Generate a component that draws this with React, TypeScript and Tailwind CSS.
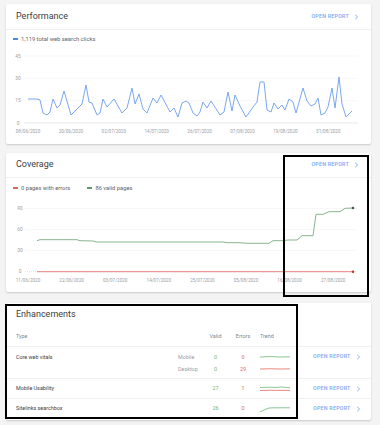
import React from 'react';

const perfPoints = [
  [28, 99], [37, 99], [40, 100], [43, 113], [47, 115], [50, 112], [53, 99], [57, 108], [60, 105], [64, 91],
  [71, 115], [82, 104], [86, 85], [89, 102], [92, 103], [97, 115], [100, 113], [103, 99], [107, 107], [114, 99],
  [122, 113], [127, 108], [132, 88], [135, 104], [139, 94], [143, 109], [147, 113], [153, 98], [157, 103], [161, 95],
  [170, 112], [174, 108], [178, 117], [182, 103], [186, 101], [189, 103], [193, 113], [197, 116], [200, 112], [203, 102],
  [207, 108], [211, 101], [220, 115], [224, 112], [228, 92], [232, 111], [235, 95], [240, 106], [246, 117], [253, 107],
  [257, 102], [260, 82], [264, 82], [267, 110], [271, 112], [274, 103], [278, 109], [282, 105], [285, 110], [289, 99],
  [293, 102], [296, 113], [303, 88], [307, 101], [311, 106], [315, 104], [318, 98], [321, 115], [325, 113], [328, 107],
  [332, 88], [335, 108], [339, 77], [342, 104], [346, 117], [352, 111],
];

const coveragePoints = [
  [37, 240.7], [40, 239.7], [77, 239.7], [80, 240.7], [93, 241], [97, 242], [223, 242], [227, 242.7], [240, 242.7],
  [247, 243.3], [269, 243.3], [273, 240.7], [283, 240.7], [288, 240], [297, 240], [302, 235.7], [313, 235.7],
  [316, 214.3], [323, 214.3], [329, 211.7], [340, 211.7], [345, 208.3], [353, 208],
];

const perfDates = ['08/06/2020', '20/06/2020', '02/07/2020', '14/07/2020', '26/07/2020', '07/08/2020', '19/08/2020', '31/08/2020'];
const covDates = ['11/06/2020', '22/06/2020', '03/07/2020', '14/07/2020', '25/07/2020', '05/08/2020', '16/08/2020', '27/08/2020'];

const toPts = (pts: number[][]) => pts.map((p) => p.join(',')).join(' ');

function Chevron() {
  return (
    <svg width="5" height="6" viewBox="0 0 5 6" className="ml-[5px]">
      <path d="M1.2 0.8 L3.6 3 L1.2 5.2" fill="none" stroke="#7aa7f2" strokeWidth="0.9" />
    </svg>
  );
}

function OpenReport() {
  return (
    <div className="flex items-center text-[5.3px] font-medium tracking-[0.25px] text-[#7aa7f2]">
      OPEN REPORT
      <Chevron />
    </div>
  );
}

function LegendItem({ color, label }: { color: string; label: string }) {
  return (
    <div className="flex items-center gap-[3px]">
      <span className="h-[1.5px] w-[5px]" style={{ backgroundColor: color }} />
      <span>{label}</span>
    </div>
  );
}

function PerformanceChart() {
  const grid = [
    { v: '45', y: 56 },
    { v: '30', y: 78.3 },
    { v: '15', y: 100.7 },
    { v: '0', y: 123 },
  ];
  return (
    <svg width="365" height="94" viewBox="6 48 365 94" className="block">
      {grid.map((g) => (
        <g key={g.v}>
          <line x1="24" x2="358" y1={g.y} y2={g.y} stroke={g.v === '0' ? '#d5d8db' : '#f1f2f3'} strokeWidth="0.6" />
          <text x="18" y={g.y + 1.7} textAnchor="middle" fontSize="4.8" fill="#9aa0a6" fontFamily="Roboto">{g.v}</text>
        </g>
      ))}
      {perfDates.map((d, i) => (
        <text key={d} x={28 + i * 42.9} y="132.5" textAnchor="middle" fontSize="4.6" fill="#9aa0a6" fontFamily="Roboto">{d}</text>
      ))}
      <polyline points={toPts(perfPoints)} fill="none" stroke="#7ba7f0" strokeWidth="1" strokeLinejoin="round" />
    </svg>
  );
}

function CoverageChart() {
  const grid = [
    { v: '90', y: 208.5 },
    { v: '60', y: 229.5 },
    { v: '30', y: 250.5 },
    { v: '0', y: 271.7 },
  ];
  return (
    <svg width="365" height="92" viewBox="6 198 365 92" className="block">
      {grid.map((g) => (
        <g key={g.v}>
          <line x1="25" x2="357" y1={g.y} y2={g.y} stroke={g.v === '0' ? '#c9ccd0' : '#f1f2f3'} strokeWidth="0.6" strokeDasharray={g.v === '0' ? '1 1' : undefined} />
          <text x="20" y={g.y + 1.7} textAnchor="middle" fontSize="4.8" fill="#9aa0a6" fontFamily="Roboto">{g.v}</text>
        </g>
      ))}
      {covDates.map((d, i) => (
        <text key={d} x={28 + i * 43.6} y="281.5" textAnchor="middle" fontSize="4.6" fill="#9aa0a6" fontFamily="Roboto">{d}</text>
      ))}
      <polyline points={toPts(coveragePoints)} fill="none" stroke="#87b58f" strokeWidth="1" />
      <circle cx="353" cy="208" r="1.3" fill="#3d5a43" />
      <line x1="37" x2="353" y1="271.7" y2="271.7" stroke="#e57a70" strokeWidth="0.9" />
      <circle cx="353" cy="271.7" r="1.3" fill="#b23a30" />
    </svg>
  );
}

function Trend({ lines }: { lines: { d: string; color: string }[] }) {
  return (
    <svg width="30" height="12" viewBox="0 0 30 12" className="block">
      {lines.map((l, i) => (
        <path key={i} d={l.d} fill="none" stroke={l.color} strokeWidth="0.8" />
      ))}
    </svg>
  );
}

const green = '#6cb97a';
const red = '#e4675c';

export default function App() {
  return (
    <div className="relative h-[425px] w-[380px] overflow-hidden bg-[#f4f4f4] pl-[6px] pt-[4px] font-['Roboto',sans-serif]">
      <div className="flex w-[365px] flex-col">
        {/* Performance */}
        <div className="h-[140px] rounded-[2px] bg-white shadow-[0_1px_2px_rgba(0,0,0,0.18)]">
          <div className="flex h-[26px] items-center justify-between border-b border-[#eef0f2] pl-[10px] pr-[12px]">
            <span className="text-[9px] text-[#3c4043]">Performance</span>
            <OpenReport />
          </div>
          <div className="flex h-[18px] items-center pl-[7px] text-[5.8px] text-[#5f6368]">
            <LegendItem color="#4f86ec" label="1,119 total web search clicks" />
          </div>
          <PerformanceChart />
        </div>

        {/* Coverage */}
        <div className="mt-[9px] h-[139px] rounded-[2px] bg-white shadow-[0_1px_2px_rgba(0,0,0,0.18)]">
          <div className="flex h-[25px] items-center justify-between border-b border-[#eef0f2] pl-[10px] pr-[12px]">
            <span className="text-[9px] text-[#3c4043]">Coverage</span>
            <OpenReport />
          </div>
          <div className="flex h-[20px] items-center gap-[17px] pl-[7px] text-[5.8px] text-[#5f6368]">
            <LegendItem color="#e0665b" label="0 pages with errors" />
            <LegendItem color="#5d9a68" label="86 valid pages" />
          </div>
          <CoverageChart />
        </div>

        {/* Enhancements */}
        <div className="mt-[11px] h-[117px] rounded-[2px] bg-white text-[5.4px] shadow-[0_1px_2px_rgba(0,0,0,0.18)]">
          <div className="flex h-[24px] items-center pl-[10px]">
            <span className="text-[9px] text-[#3c4043]">Enhancements</span>
          </div>
          <div className="flex h-[20px] items-center border-b border-[#eef0f2] pl-[10px] text-[#80868b]">
            <span className="w-[162px]">Type</span>
            <span className="w-[25px]" />
            <span className="w-[25px] text-center">Valid</span>
            <span className="w-[30px] text-center">Errors</span>
            <span className="ml-[2px] w-[30px]">Trend</span>
          </div>

          <div className="flex h-[32px] border-b border-[#eef0f2] pl-[10px] pt-[4px]">
            <span className="flex h-[12px] w-[162px] items-center text-[#3c4043]">Core web vitals</span>
            <div className="flex flex-col">
              <div className="flex h-[12px] items-center">
                <span className="w-[25px] text-[#9aa0a6]">Mobile</span>
                <span className="w-[25px] text-center" style={{ color: green }}>0</span>
                <span className="w-[30px] text-center" style={{ color: red }}>0</span>
                <span className="ml-[2px]">
                  <Trend lines={[{ d: 'M0 6 L10 5.6 L20 6 L30 5.8', color: green }]} />
                </span>
              </div>
              <div className="flex h-[12px] items-center">
                <span className="w-[25px] text-[#9aa0a6]">Desktop</span>
                <span className="w-[25px] text-center" style={{ color: green }}>0</span>
                <span className="w-[30px] text-center" style={{ color: red }}>29</span>
                <span className="ml-[2px]">
                  <Trend lines={[{ d: 'M0 6 L10 5.8 L20 6 L30 5.9', color: red }]} />
                </span>
              </div>
            </div>
            <div className="ml-[23px] flex h-[12px] items-center">
              <OpenReport />
            </div>
          </div>

          <div className="flex h-[20px] items-center border-b border-[#eef0f2] pl-[10px]">
            <span className="w-[162px] text-[#3c4043]">Mobile Usability</span>
            <span className="w-[25px]" />
            <span className="w-[25px] text-center" style={{ color: green }}>27</span>
            <span className="w-[30px] text-center" style={{ color: red }}>1</span>
            <span className="ml-[2px]">
              <Trend
                lines={[
                  { d: 'M0 4.5 L8 4.2 L16 4.4 L22 4 L30 4.8', color: green },
                  { d: 'M0 7.5 L10 7.2 L20 7.4 L30 7.3', color: red },
                ]}
              />
            </span>
            <span className="ml-[23px]">
              <OpenReport />
            </span>
          </div>

          <div className="flex h-[19px] items-center pl-[10px]">
            <span className="w-[162px] text-[#3c4043]">Sitelinks searchbox</span>
            <span className="w-[25px]" />
            <span className="w-[25px] text-center" style={{ color: green }}>26</span>
            <span className="w-[30px] text-center" style={{ color: red }}>0</span>
            <span className="ml-[2px]">
              <Trend lines={[{ d: 'M0 9 L5 6.5 L9 5 L14 4.8 L30 4.8', color: green }]} />
            </span>
            <span className="ml-[23px]">
              <OpenReport />
            </span>
          </div>
        </div>
      </div>

      {/* annotation boxes */}
      <div className="absolute left-[283px] top-[155px] h-[142px] w-[86px] border-2 border-black" />
      <div className="absolute left-[5px] top-[304px] h-[115px] w-[293px] border-2 border-black" />
    </div>
  );
}
